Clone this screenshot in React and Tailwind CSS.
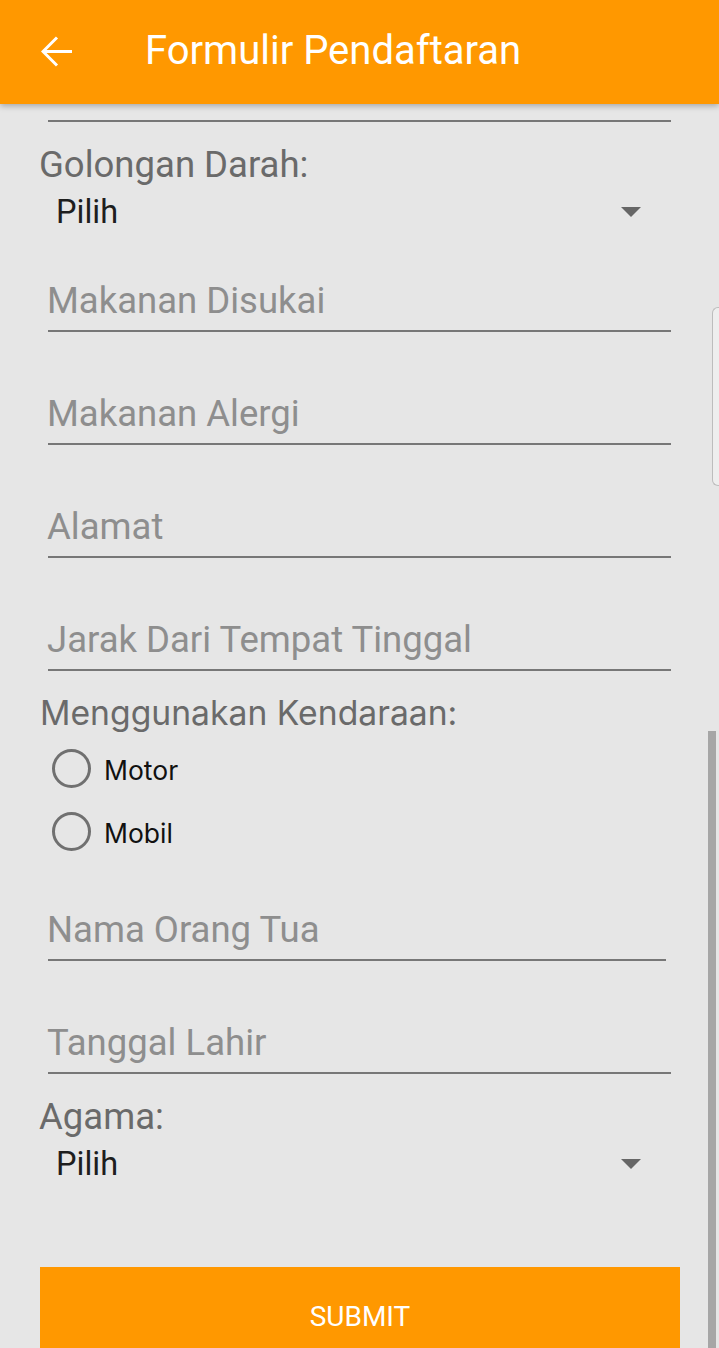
export default function App() {
  const roboto = { fontFamily: "Roboto, 'Liberation Sans', sans-serif" };
  const alt = { fontFamily: "Inter, 'Noto Sans', sans-serif" };

  const Field = ({ label, mt = "mt-[62px]", mr = "mr-[48px]" }) => (
    <div className={`${mt} flex flex-col`}>
      <div className="pl-[47px] text-[36.5px] leading-[40px] text-[#8e8e8e]" style={roboto}>
        {label}
      </div>
      <div className={`mt-[9px] ml-[48px] ${mr} h-[2px] bg-[#777777]`} />
    </div>
  );

  const Spinner = () => (
    <div className="mt-[7px] flex h-[40px] items-center justify-between pl-[56px] pr-[78px]">
      <span className="text-[32.5px] leading-[40px] text-[#1e1e1e]" style={roboto}>
        Pilih
      </span>
      <svg width="20" height="10" viewBox="0 0 20 10">
        <path d="M0 0 H20 L10 10 Z" fill="#666666" />
      </svg>
    </div>
  );

  const Radio = ({ label }) => (
    <div className="flex h-[46px] items-center pl-[52px]">
      <div className="h-[39px] w-[39px] rounded-full border-[3px] border-[#707070]" />
      <span className="ml-[13px] pt-[3px] text-[26.5px] leading-[34px] text-[#111111]" style={alt}>
        {label}
      </span>
    </div>
  );

  return (
    <div className="relative h-[1348px] w-full overflow-hidden bg-[#e6e6e6]">
      <header className="relative z-10 flex h-[104px] items-center bg-[#ff9800] pb-[2px] shadow-[0_2px_6px_rgba(0,0,0,0.28)]">
        <div className="ml-[41px] flex h-[31px] w-[31px] items-center">
          <svg width="31" height="31" viewBox="0 0 31 31" fill="none">
            <path d="M2 15.5 H31" stroke="#ffffff" strokeWidth="3" />
            <path d="M16 1.5 L2 15.5 L16 29.5" stroke="#ffffff" strokeWidth="3" />
          </svg>
        </div>
        <h1 className="ml-[73px] text-[40px] leading-[44px] text-white" style={roboto}>
          Formulir Pendaftaran
        </h1>
      </header>

      <main className="flex flex-col">
        <div className="mt-[16px] mx-[48px] h-[2px] bg-[#777777]" />
        <div className="mt-[23px] pl-[39px] text-[36.5px] leading-[40px] text-[#6a6a6a]" style={roboto}>
          Golongan Darah:
        </div>
        <Spinner />
        <Field label="Makanan Disukai" mt="mt-[49px]" />
        <Field label="Makanan Alergi" />
        <Field label="Alamat" />
        <Field label="Jarak Dari Tempat Tinggal" />
        <div className="mt-[25px] pl-[40px] text-[33.7px] leading-[34px] text-[#6a6a6a]" style={alt}>
          Menggunakan Kendaraan:
        </div>
        <div className="mt-[15px] flex flex-col gap-[17px]">
          <Radio label="Motor" />
          <Radio label="Mobil" />
        </div>
        <Field label="Nama Orang Tua" mt="mt-[56px]" mr="mr-[53px]" />
        <Field label="Tanggal Lahir" />
        <div className="mt-[23px] pl-[39px] text-[36.5px] leading-[40px] text-[#6a6a6a]" style={roboto}>
          Agama:
        </div>
        <Spinner />
        <button
          className="mt-[83px] ml-[40px] flex h-[100px] w-[640px] shrink-0 items-center justify-center bg-[#ff9800] text-[28px] text-white"
          style={roboto}
        >
          SUBMIT
        </button>
      </main>

      <div className="absolute right-0 top-[307px] h-[179px] w-[7px] rounded-l-[6px] border border-r-0 border-[#bdbdbd] bg-[#eeeeee]" />
      <div className="absolute bottom-0 left-[708px] top-[731px] w-[8px] bg-[#a6a6a6]" />
    </div>
  );
}
